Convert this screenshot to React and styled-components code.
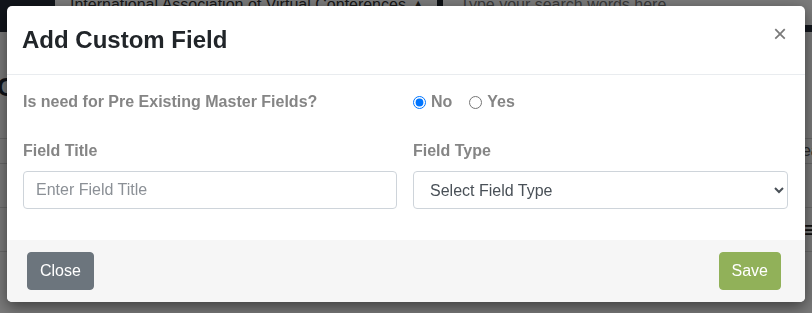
import React from 'react'
import styled, { createGlobalStyle } from 'styled-components'

const GlobalStyle = createGlobalStyle`
  html, body {
    margin: 0;
    padding: 0;
    height: 100%;
    overflow: hidden;
    background: #ffffff;
    font-family: "Liberation Sans", Arial, sans-serif;
  }
  * { box-sizing: border-box; }
`;

const App = () => {
    return (
        <>
            <GlobalStyle />
            <Page>
                <TopBar>
                    <Brand />
                    <OrgSelect>International Association of Virtual Conferences &#9650;</OrgSelect>
                    <Divider />
                    <SearchBox>Type your search words here</SearchBox>
                </TopBar>
                <Content>
                    <PageTitle>Custom Fields</PageTitle>
                    <ToolRow>
                        <span />
                        <SearchButton>Search</SearchButton>
                    </ToolRow>
                    <TableRow />
                    <TableRow>
                        <span />
                        <MenuGlyph>&#8801;</MenuGlyph>
                    </TableRow>
                </Content>
            </Page>

            <Backdrop>
                <Modal>
                    <Header>
                        <Title>Add Custom Field</Title>
                        <CloseX type="button">&times;</CloseX>
                    </Header>

                    <Body>
                        <Grid>
                            <Question>Is need for Pre Existing Master Fields?</Question>
                            <RadioGroup>
                                <RadioLabel>
                                    <Radio type="radio" name="master" defaultChecked />
                                    No
                                </RadioLabel>
                                <RadioLabel>
                                    <Radio type="radio" name="master" />
                                    Yes
                                </RadioLabel>
                            </RadioGroup>
                        </Grid>

                        <Grid spaced>
                            <Group>
                                <Label>Field Title</Label>
                                <Input placeholder="Enter Field Title" />
                            </Group>
                            <Group>
                                <Label>Field Type</Label>
                                <Select defaultValue="">
                                    <option value="">Select Field Type</option>
                                    <option value="text">Text</option>
                                    <option value="number">Number</option>
                                </Select>
                            </Group>
                        </Grid>
                    </Body>

                    <Footer>
                        <Button variant="secondary">Close</Button>
                        <Button variant="save">Save</Button>
                    </Footer>
                </Modal>
            </Backdrop>
        </>
    )
}

export default App

const Page = styled.div`
    width: 812px;
    height: 313px;
    background: #ffffff;
`;

const TopBar = styled.div`
    display: flex;
    height: 32px;
    background: #28303d;
`;

const Brand = styled.div`
    width: 55px;
    background: #252c38;
`;

const OrgSelect = styled.div`
    width: 382px;
    height: 25px;
    background: #ffffff;
    padding-left: 15px;
    font-size: 16px;
    line-height: 10px;
    color: #333;
    overflow: hidden;
    white-space: nowrap;
`;

const Divider = styled.div`
    width: 6px;
    background: #1c222b;
`;

const SearchBox = styled.div`
    flex: 1;
    height: 25px;
    background: #ffffff;
    padding-left: 17px;
    font-size: 16px;
    line-height: 10px;
    color: #777;
    white-space: nowrap;
    overflow: hidden;
`;

const Content = styled.div`
    padding: 0;
`;

const PageTitle = styled.h1`
    margin: 40px 0 0 -3px;
    font-size: 26px;
    line-height: 30px;
    color: #1e2633;
`;

const ToolRow = styled.div`
    display: flex;
    justify-content: space-between;
    align-items: center;
    border-top: 1px solid #d7d7d7;
    border-bottom: 1px solid #d7d7d7;
    margin-top: 36px;
    height: 26px;
`;

const SearchButton = styled.span`
    font-size: 16px;
    color: #555;
    margin-right: -30px;
`;

const TableRow = styled.div`
    display: flex;
    justify-content: space-between;
    align-items: center;
    height: 44px;
    border-bottom: 1px solid #dcdcdc;
`;

const MenuGlyph = styled.span`
    font-size: 24px;
    color: #222;
    margin-right: -6px;
`;

const Backdrop = styled.div`
    position: fixed;
    inset: 0;
    background: rgba(0, 0, 0, 0.52);
    display: flex;
    justify-content: center;
    align-items: flex-start;
    padding-top: 6px;
`;

const Modal = styled.div`
    width: 798px;
    background: #ffffff;
    border-radius: 5px;
    overflow: hidden;
    box-shadow: 0 5px 15px rgba(0, 0, 0, 0.5);
    font-family: "Liberation Sans", Arial, sans-serif;
`;

const Header = styled.div`
    display: flex;
    align-items: flex-start;
    padding: 16px 16px 16px 15px;
    border-bottom: 1px solid #e9ecef;
`;

const Title = styled.h4`
    margin: 0;
    font-size: 24px;
    line-height: 36px;
    font-weight: 700;
    color: #212529;
`;

const CloseX = styled.button`
    margin: -16px -16px -16px auto;
    padding: 16px 18px;
    background: transparent;
    border: 0;
    font-family: "Liberation Sans", Arial, sans-serif;
    font-size: 24px;
    line-height: 1;
    font-weight: 400;
    color: #7a7a7a;
    cursor: pointer;
`;

const Body = styled.div`
    padding: 15px 16px 16px;
`;

const Grid = styled.div`
    display: grid;
    grid-template-columns: 374px 375px;
    column-gap: 16px;
    margin-top: ${(props) => (props.spaced ? '25px' : '0')};
    margin-bottom: ${(props) => (props.spaced ? '15px' : '0')};
`;

const Question = styled.div`
    font-size: 16px;
    line-height: 24px;
    font-weight: 700;
    color: #858585;
`;

const RadioGroup = styled.div`
    display: flex;
    align-items: center;
    gap: 17px;
`;

const RadioLabel = styled.label`
    display: flex;
    align-items: center;
    gap: 5px;
    font-size: 16px;
    line-height: 24px;
    font-weight: 700;
    color: #858585;
`;

const Radio = styled.input`
    width: 13px;
    height: 13px;
    margin: 0;
`;

const Group = styled.div`
    display: flex;
    flex-direction: column;
`;

const Label = styled.label`
    font-size: 16px;
    line-height: 24px;
    font-weight: 700;
    color: #858585;
    margin-bottom: 8px;
`;

const Input = styled.input`
    height: 38px;
    padding: 6px 12px;
    border: 1px solid #ced4da;
    border-radius: 4px;
    font-family: "Liberation Sans", Arial, sans-serif;
    font-size: 16px;
    color: #495057;
    outline: none;

    &::placeholder {
        color: #8b9096;
    }
`;

const Select = styled.select`
    height: 38px;
    padding: 6px 8px 6px 12px;
    border: 1px solid #ced4da;
    border-radius: 4px;
    background: #ffffff;
    font-family: "Liberation Sans", Arial, sans-serif;
    font-size: 16px;
    color: #495057;
    outline: none;
`;

const Footer = styled.div`
    display: flex;
    justify-content: space-between;
    align-items: center;
    padding: 12px 24px 12px 20px;
    background: #f6f6f6;
`;

const Button = styled.button`
    height: 38px;
    padding: 6px 12px;
    border: 1px solid ${(props) => (props.variant === 'save' ? '#91b159' : '#6c757d')};
    border-radius: 4px;
    background: ${(props) => (props.variant === 'save' ? '#91b159' : '#6c757d')};
    color: #ffffff;
    font-family: "Liberation Sans", Arial, sans-serif;
    font-size: 16px;
    line-height: 24px;
    cursor: pointer;
`;
